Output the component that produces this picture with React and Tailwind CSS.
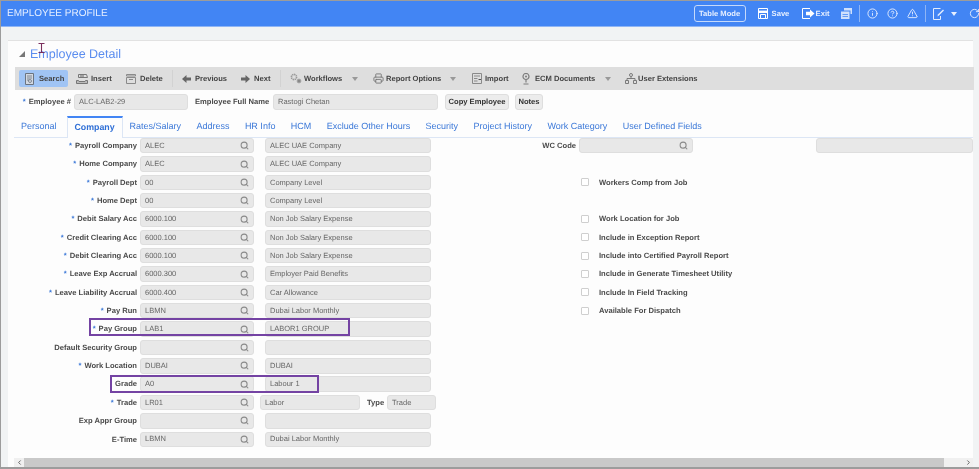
import { Search, Info, CircleHelp, TriangleAlert, RotateCw, Printer, ChevronLeft, ChevronRight } from "lucide-react";

const leftRows = [
  { label: "Payroll Company", req: true, code: "ALEC", desc: "ALEC UAE Company" },
  { label: "Home Company", req: true, code: "ALEC", desc: "ALEC UAE Company" },
  { label: "Payroll Dept", req: true, code: "00", desc: "Company Level" },
  { label: "Home Dept", req: true, code: "00", desc: "Company Level" },
  { label: "Debit Salary Acc", req: true, code: "6000.100", desc: "Non Job Salary Expense" },
  { label: "Credit Clearing Acc", req: true, code: "6000.100", desc: "Non Job Salary Expense" },
  { label: "Debit Clearing Acc", req: true, code: "6000.100", desc: "Non Job Salary Expense" },
  { label: "Leave Exp Accrual", req: true, code: "6000.300", desc: "Employer Paid Benefits" },
  { label: "Leave Liability Accrual", req: true, code: "6000.400", desc: "Car Allowance" },
  { label: "Pay Run", req: true, code: "LBMN", desc: "Dubai Labor Monthly" },
  { label: "Pay Group", req: true, code: "LAB1", desc: "LABOR1 GROUP", mark: "group" },
  { label: "Default Security Group", code: "", desc: "" },
  { label: "Work Location", req: true, code: "DUBAI", desc: "DUBAI" },
  { label: "Grade", code: "A0", desc: "Labour 1", mark: "grade" },
  { label: "Trade", req: true, code: "LR01", desc: "Labor", trade: true },
  { label: "Exp Appr Group", code: "", desc: "" },
  { label: "E-Time", code: "LBMN", desc: "Dubai Labor Monthly" },
];

const checks = [
  null,
  "Workers Comp from Job",
  null,
  "Work Location for Job",
  "Include in Exception Report",
  "Include into Certified Payroll Report",
  "Include in Generate Timesheet Utility",
  "Include In Field Tracking",
  "Available For Dispatch",
];

const tabs = ["Rates/Salary", "Address", "HR Info", "HCM", "Exclude Other Hours", "Security", "Project History", "Work Category", "User Defined Fields"];

const Field = ({ className, children }) => (
  <div className={`h-[15.4px] shrink-0 flex items-center px-[4px] bg-[#e8e8e8] border border-[#dedede] rounded-[3px] text-[7.5px] leading-none text-[#666] whitespace-nowrap ${className}`}>
    {children}
  </div>
);

const LookupField = ({ value, className }) => (
  <Field className={`justify-between ${className}`}>
    <span>{value}</span>
    <Search size={9} strokeWidth={2.8} className="text-[#8a8a8a]" />
  </Field>
);

const FormRow = ({ row }) => (
  <div className="relative h-[18.35px] flex items-start">
    <div className="w-[123px] h-[15.4px] flex items-center justify-end text-[7.6px] font-bold text-[#4a4a4a] whitespace-nowrap">
      {row.req && <span className="text-[#3b78d8] mr-[3px]">*</span>}
      {row.label}
    </div>
    <LookupField value={row.code} className="ml-[3px] w-[114px]" />
    {row.trade ? (
      <>
        <Field className="ml-[6px] w-[100px]">{row.desc}</Field>
        <span className="ml-[7px] w-[20px] h-[15.4px] flex items-center text-[7.6px] font-bold text-[#4a4a4a]">Type</span>
        <Field className="w-[49px]">Trade</Field>
      </>
    ) : (
      <Field className="ml-[11px] w-[166px]">{row.desc}</Field>
    )}
    {row.mark === "group" && (
      <div className="absolute left-[75px] top-[-3px] w-[261px] h-[18px] border-2 border-[#7443a3] z-10" />
    )}
    {row.mark === "grade" && (
      <div className="absolute left-[96px] top-[-1px] w-[209px] h-[18px] border-2 border-[#7443a3] z-10" />
    )}
  </div>
);

const Caret = ({ className }) => (
  <svg width="6" height="4" viewBox="0 0 6 4" className={className}>
    <path d="M0 0h6L3 4z" fill="currentColor" />
  </svg>
);

const SaveIcon = () => (
  <svg width="10" height="11" viewBox="0 0 10 11" fill="none" stroke="white" strokeWidth="1">
    <path d="M.5.5h9v10h-9z" />
    <path d="M.5 3.8h9" strokeWidth="2.4" />
    <path d="M2.5 6.5h5v4h-5z" fill="#4285f4" />
  </svg>
);

const ExitIcon = () => (
  <svg width="13" height="11" viewBox="0 0 13 11" fill="none">
    <path d="M8 .5H.5v10H8" stroke="white" />
    <path d="M4 3.8h4V1.5l4.5 4L8 9.5V7.2H4z" fill="white" />
  </svg>
);

const CopyDocs = () => (
  <svg width="11" height="11" viewBox="0 0 11 11" fill="white" opacity="0.75">
    <path d="M3 0h8v6H9.5V2.5H3z" />
    <path d="M0 3.5h8.5V11H0z" />
    <path d="M1.5 6h5.5v.8H1.5zM1.5 8h5.5v.8H1.5z" fill="#4285f4" />
  </svg>
);

const NoteEdit = () => (
  <svg width="11" height="12" viewBox="0 0 11 12" fill="none" stroke="white" strokeWidth="1" opacity="0.85">
    <path d="M7.5 8v3.5H.5V.5h7" />
    <path d="M4.5 8.5l.4-2L10 1.5l1 1-5 5z" fill="white" stroke="none" />
  </svg>
);

const DocSearch = () => (
  <svg width="9" height="12" viewBox="0 0 9 12" fill="#d3d9e2" stroke="#6b7480" strokeWidth="1">
    <path d="M.5.5h8v11h-8z" />
    <path d="M2 3h5M2 5h5M2 7h2" strokeWidth=".8" />
    <circle cx="5" cy="8" r="1.5" fill="none" strokeWidth=".8" />
  </svg>
);

const TrayPlus = () => (
  <svg width="12" height="10" viewBox="0 0 12 10" fill="none" stroke="#777" strokeWidth="1">
    <path d="M2.5.5h8l1 3h-9z" />
    <path d="M.5 6.5h2l.5 1h6l.5-1h2v3H.5z" fill="#bbb" />
    <path d="M4 2h4" strokeWidth="1.2" />
  </svg>
);

const TrayMinus = () => (
  <svg width="12" height="10" viewBox="0 0 12 10" fill="none" stroke="#8a8a8a" strokeWidth="1">
    <path d="M1.5.5h9v1.5h-9z" />
    <path d="M1.5 3.5h9v6h-9z" />
    <path d="M4 5.5h4" />
  </svg>
);

const ArrowIcon = ({ flip }) => (
  <svg width="9" height="8" viewBox="0 0 9 8" className={flip ? "rotate-180" : ""}>
    <path d="M0 2.5h4.5V0L9 4 4.5 8V5.5H0z" fill="#666" />
  </svg>
);

const Gears = () => (
  <svg width="12" height="11" viewBox="0 0 12 11" fill="none" stroke="#9a9a9a">
    <circle cx="4" cy="4" r="2.6" strokeWidth="1.6" strokeDasharray="1.4 .6" />
    <circle cx="9" cy="8" r="2" fill="#888" stroke="#aaa" strokeWidth=".8" />
  </svg>
);

const ImportIcon = () => (
  <svg width="10" height="11" viewBox="0 0 10 11" fill="none" stroke="#8a8a8a" strokeWidth="1">
    <path d="M.5.5h9v10h-9z" />
    <path d="M2 3h6M2 5.5h3.5M2 8h3.5" />
    <path d="M9 6.5H6.5" stroke="#555" />
  </svg>
);

const EcmIcon = () => (
  <svg width="8" height="12" viewBox="0 0 8 12" fill="none" stroke="#7d7d7d">
    <circle cx="4" cy="3.5" r="3" strokeWidth="1.2" />
    <circle cx="4" cy="3.5" r="1" fill="#7d7d7d" stroke="none" />
    <path d="M4 6.5v3M1.5 11h5" strokeWidth="1.2" />
  </svg>
);

const TreeIcon = () => (
  <svg width="12" height="11" viewBox="0 0 12 11" fill="none" stroke="#6f6f6f" strokeWidth=".9">
    <circle cx="6" cy="2" r="1.5" />
    <path d="M6 3.5v2M2 7.5v-2h8v2" />
    <path d="M.5 7.5h3v3h-3zM8.5 7.5h3v3h-3z" />
  </svg>
);

const ToolItem = ({ icon, text, textWidth, className = "", active }) => (
  <div className={`h-[17px] flex items-center shrink-0 ${active ? "bg-[#a0c4f4] rounded-[2px]" : ""} ${className}`}>
    {icon}
    <span className={`text-[7.6px] font-bold text-[#444] whitespace-nowrap ${textWidth}`}>{text}</span>
  </div>
);

const Sep = ({ className }) => <div className={`w-px h-[17px] bg-[#d2d2d2] shrink-0 ${className}`} />;

const App = () => {
  return (
    <div className="relative w-[979px] h-[469px] overflow-hidden bg-[#f1f3f4] border-t border-l border-b-2 border-[#9c9c9c] flex flex-col blur-[0.45px] [text-rendering:geometricPrecision]" style={{ fontFamily: '"Liberation Sans", Arial, sans-serif' }}>
      {/* HEADER */}
      <div className="h-[26px] shrink-0 bg-[#4285f4] border-b border-[#8fb5f5] flex items-center text-white">
        <div className="ml-[6px] w-[102px] text-[10px] text-[#e6efff] whitespace-nowrap">EMPLOYEE PROFILE</div>
        <div className="ml-[586px] w-[52px] h-[17px] shrink-0 border border-[#c5d9fb] rounded-[3px] flex items-center justify-center text-[7.6px] font-bold text-[#e6efff] whitespace-nowrap">
          Table Mode
        </div>
        <div className="ml-[12px] flex items-center shrink-0"><SaveIcon /></div>
        <span className="ml-[4px] w-[17px] text-[7.6px] font-bold text-[#e6efff]">Save</span>
        <div className="ml-[13px] flex items-center shrink-0"><ExitIcon /></div>
        <span className="ml-[1px] w-[14px] text-[7.6px] font-bold text-[#e6efff]">Exit</span>
        <div className="ml-[11px] flex items-center shrink-0"><CopyDocs /></div>
        <div className="ml-[7px] w-px h-[17px] bg-[#8fb5f5] shrink-0" />
        <Info size={11} className="ml-[7px] shrink-0 text-[#e6efff]" />
        <CircleHelp size={11} className="ml-[9px] shrink-0 text-[#e6efff]" />
        <TriangleAlert size={11} className="ml-[9px] shrink-0 text-[#e6efff]" />
        <div className="ml-[7px] w-px h-[17px] bg-[#8fb5f5] shrink-0" />
        <div className="ml-[7px] flex items-center shrink-0"><NoteEdit /></div>
        <Caret className="ml-[7px] shrink-0 text-[#e6efff]" />
        <RotateCw size={11} className="ml-[12px] shrink-0 text-[#e6efff]" />
      </div>

      {/* CARD */}
      <div className="ml-[7px] mt-[13px] w-[965px] flex-1 min-h-0 bg-[#fdfdfd] border-t border-[#e2e2e2] flex flex-col">
        {/* TITLE */}
        <div className="h-[26px] shrink-0 flex items-center">
          <svg width="6" height="6" viewBox="0 0 6 6" className="ml-[11px] mr-[5px] text-[#777]">
            <path d="M6 0v6H0z" fill="currentColor" />
          </svg>
          <span className="text-[12.5px] text-[#5b8def] whitespace-nowrap">Employee Detail</span>
        </div>

        {/* TOOLBAR */}
        <div className="ml-[7px] h-[23px] w-[959px] shrink-0 bg-[#dedede] flex items-center">
          <ToolItem active className="ml-[4px] w-[49px] pl-[6px] gap-[5px]" icon={<DocSearch />} text="Search" />
          <ToolItem className="ml-[8px] gap-[3px]" icon={<TrayPlus />} text="Insert" textWidth="w-[20px]" />
          <ToolItem className="ml-[14px] gap-[3px]" icon={<TrayMinus />} text="Delete" textWidth="w-[22px]" />
          <Sep className="ml-[10px]" />
          <ToolItem className="ml-[9px] gap-[4px]" icon={<ArrowIcon flip />} text="Previous" textWidth="w-[32px]" />
          <ToolItem className="ml-[14px] gap-[4px]" icon={<ArrowIcon />} text="Next" textWidth="w-[17px]" />
          <Sep className="ml-[9px]" />
          <ToolItem className="ml-[9px] gap-[2px]" icon={<Gears />} text="Workflows" textWidth="w-[39px]" />
          <Caret className="ml-[9px] shrink-0 text-[#999]" />
          <ToolItem className="ml-[15px] gap-[2px]" icon={<Printer size={11} className="text-[#777]" />} text="Report Options" textWidth="w-[55px]" />
          <Caret className="ml-[9px] shrink-0 text-[#999]" />
          <ToolItem className="ml-[16px] gap-[3px]" icon={<ImportIcon />} text="Import" textWidth="w-[23px]" />
          <ToolItem className="ml-[14px] gap-[5px]" icon={<EcmIcon />} text="ECM Documents" textWidth="w-[60px]" />
          <Caret className="ml-[10px] shrink-0 text-[#999]" />
          <ToolItem className="ml-[14px] gap-[1px]" icon={<TreeIcon />} text="User Extensions" textWidth="w-[60px]" />
        </div>

        {/* EMPLOYEE ROW */}
        <div className="mt-[4px] h-[16px] shrink-0 flex items-center text-[7.6px] font-bold text-[#4a4a4a] whitespace-nowrap">
          <span className="w-[63px] text-right"><span className="text-[#3b78d8] mr-[3px]">*</span>Employee #</span>
          <Field className="ml-[3px] !h-[16px] w-[114px] font-normal">ALC-LAB2-29</Field>
          <span className="ml-[7px] w-[74px] text-right">Employee Full Name</span>
          <Field className="ml-[4px] !h-[16px] w-[165px] font-normal">Rastogi Chetan</Field>
          <div className="ml-[7px] w-[64px] h-[16px] shrink-0 flex items-center justify-center bg-[#ececec] border border-[#dedede] rounded-[3px] text-[#333]">Copy Employee</div>
          <div className="ml-[6px] w-[28px] h-[16px] shrink-0 flex items-center justify-center bg-[#ececec] border border-[#dedede] rounded-[3px] text-[#333]">Notes</div>
        </div>

        {/* TABS */}
        <div className="mt-[5px] ml-[6px] h-[22px] shrink-0 flex items-center pt-[1px] text-[9px] text-[#3b78d8] whitespace-nowrap">
          <span className="ml-[7px]">Personal</span>
          <div className="ml-[10px] w-[56px] h-[22px] shrink-0 flex items-center justify-center font-bold text-[8.8px] text-[#2f6fd6] bg-[#fdfdfd] border-t-2 border-x border-t-[#4285f4] border-x-[#dce6f5] relative z-[1]">Company</div>
          <div className="ml-[7px] flex gap-[15.4px]">
            {tabs.map((t) => (
              <span key={t}>{t}</span>
            ))}
          </div>
        </div>

        {/* FORM */}
        <div className="ml-[6px] flex-1 min-h-0 border-t border-[#dce6f5] flex flex-col">
          <div className="flex">
            <div className="w-[486px] shrink-0">
              {leftRows.map((r) => (
                <FormRow key={r.label} row={r} />
              ))}
            </div>
            <div className="flex-1">
              <div className="h-[18.35px] flex items-start">
                <div className="w-[76px] h-[15.4px] flex items-center justify-end text-[7.6px] font-bold text-[#4a4a4a]">WC Code</div>
                <LookupField value="" className="ml-[3px] w-[114px]" />
                <Field className="ml-[123px] w-[157px]" />
              </div>
              {checks.map((c, i) => (
                <div key={i} className="h-[18.35px] flex items-start">
                  {c && (
                    <div className="ml-[81px] h-[15.4px] flex items-center">
                      <div className="w-[8px] h-[8px] shrink-0 bg-white border border-[#cfcfcf] rounded-[1px]" />
                      <span className="ml-[10px] text-[7.6px] font-bold text-[#4a4a4a] whitespace-nowrap">{c}</span>
                    </div>
                  )}
                </div>
              ))}
            </div>
          </div>

          {/* SCROLLBAR */}
          <div className="mt-auto h-[9px] shrink-0 flex items-center bg-[#f0f0f0]">
            <div className="w-[10px] flex justify-center"><ChevronLeft size={7} strokeWidth={3} className="text-[#555]" /></div>
            <div className="w-[920px] h-[9px] bg-[#c9c9c9]" />
            <div className="flex-1 flex justify-end pr-[1px]"><ChevronRight size={7} strokeWidth={3} className="text-[#555]" /></div>
          </div>
        </div>
      </div>

      {/* text cursor left in the capture */}
      <svg width="7" height="10" viewBox="0 0 7 10" className="absolute left-[37px] top-[42px] z-10" fill="none" stroke="#7a2f5c" strokeWidth="1.1">
        <path d="M.5.5h6M.5 9.5h6M3.5.5v9" />
      </svg>
    </div>
  );
};

export default App;
